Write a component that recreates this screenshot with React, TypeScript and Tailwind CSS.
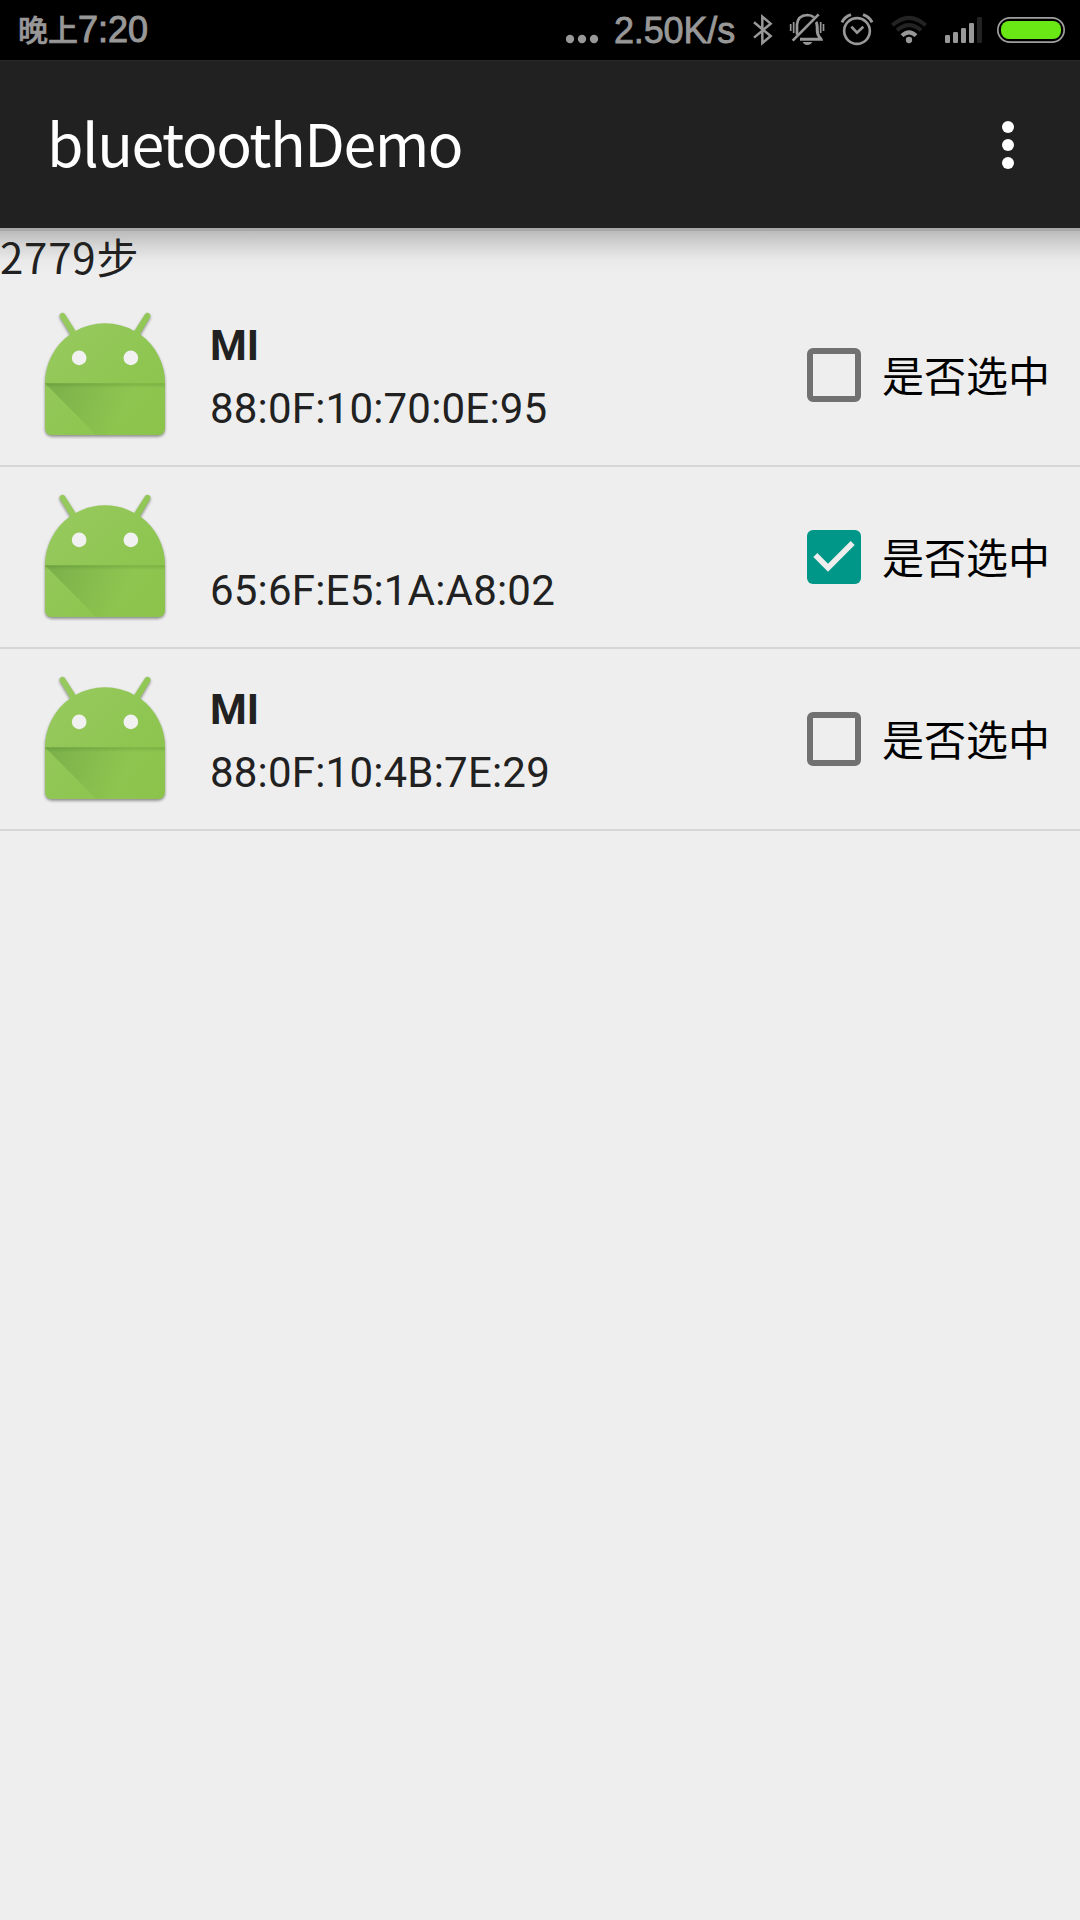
import React from "react";

const CJK = "font-['Noto_Sans_CJK_SC',sans-serif]";

function StatusIcons() {
  return (
    <div className="flex h-[60px] items-start text-[#989898]">
      <svg className="mr-[15px] h-[60px] w-[33px]" viewBox="48 0 99 180" fill="currentColor">
        <circle cx="60" cy="117" r="12.5" />
        <circle cx="96" cy="117" r="12.5" />
        <circle cx="132" cy="117" r="12.5" />
      </svg>
      <span className="mr-[15px] w-[121px] whitespace-nowrap pt-[1px] font-['Liberation_Sans',sans-serif] text-[36px] leading-[60px] tracking-[-0.15px] [-webkit-text-stroke:0.8px_#989898]">
        2.50K/s
      </span>
      <svg className="mr-[13px] h-[60px] w-[25px]" viewBox="600 0 75 180" fill="none" stroke="currentColor" strokeWidth="7.5">
        <path d="M612 67 L662 108 L637 129 V50 L662 71 L612 113" />
      </svg>
      <svg className="mr-[14px] h-[60px] w-[38px]" viewBox="24 0 114 180" fill="none" stroke="currentColor" strokeWidth="6">
        <path d="M51 104 V74 Q53 46 82 45 Q94 45 102 52" strokeWidth="8" />
        <path d="M38 122 L116 43" strokeWidth="8" />
        <path d="M108 66 Q112 70 112 96 Q113 104 118 111 Q122 115 123 118 H60" strokeWidth="9" />
        <path d="M32 72 V93 M41 66 V99 M122 66 V99 M130.500 72 V93" strokeWidth="5" />
        <path d="M68 126 H97 Q92 135 82 135 Q72 135 68 126Z" fill="currentColor" stroke="none" />
      </svg>
      <svg className="mr-[16px] h-[60px] w-[34px]" viewBox="180 0 102 180" fill="none" stroke="currentColor" strokeWidth="8">
        <circle cx="231" cy="93" r="38.5" />
        <path d="M214 80 L231 98 L250 80" />
        <path d="M186 67 Q192 52 213 44 M276 67 Q270 52 249 44" strokeWidth="9" />
      </svg>
      <svg className="mr-[16px] h-[60px] w-[38px]" viewBox="330 0 114 180" fill="none" stroke="#232323" strokeWidth="12">
        <path d="M337 76 Q387 31 437 76" />
        <path d="M351 91 Q387 60 423 91" />
        <path d="M366 107 Q387 87 408 107" stroke="#989898" />
        <circle cx="387" cy="120" r="9.500" fill="#989898" stroke="none" />
      </svg>
      <svg className="mr-[13px] h-[60px] w-[39px]" viewBox="492 0 117 180" fill="currentColor">
        <rect x="495" y="105" width="15" height="24" rx="4" />
        <rect x="519" y="96" width="15" height="33" rx="4" />
        <rect x="543" y="84" width="15" height="45" rx="4" />
        <rect x="567" y="69" width="15" height="60" rx="4" />
        <rect x="591" y="51" width="15" height="78" rx="4" fill="#232323" />
      </svg>
      <svg className="h-[60px] w-[70px]" viewBox="648 0 210 180">
        <rect x="653.5" y="53.5" width="199" height="73" rx="36.500" fill="none" stroke="#a0a0a0" strokeWidth="5" />
        <rect x="663" y="63" width="180" height="54" rx="24" fill="#6ae816" />
      </svg>
    </div>
  );
}

function AndroidIcon({ id }: { id: string }) {
  const body = "M75 280 A180 180 0 0 1 151 133 L119 80 A9 9 0 0 1 134 71 L167 123 A180 180 0 0 1 343 123 L376 71 A9 9 0 0 1 391 80 L360 133 A180 180 0 0 1 435 280 V413 Q435 435 413 435 H97 Q75 435 75 413Z";
  return (
    <svg className="size-[144px] shrink-0" viewBox="39 39 432 432">
      <defs>
        <linearGradient id={`${id}-body`} x1="0" y1="0" x2="1" y2="1">
          <stop offset="0" stopColor="#98ca60" />
          <stop offset="0.6" stopColor="#8fc652" />
          <stop offset="1" stopColor="#8bc34a" />
        </linearGradient>
        <linearGradient id={`${id}-cast`} gradientUnits="userSpaceOnUse" x1="80" y1="285" x2="300" y2="380">
          <stop offset="0" stopColor="#33691e" stopOpacity="0.26" />
          <stop offset="1" stopColor="#33691e" stopOpacity="0" />
        </linearGradient>
        <linearGradient id={`${id}-edge`} x1="0" y1="0" x2="0" y2="1">
          <stop offset="0" stopColor="#33691e" stopOpacity="0.22" />
          <stop offset="1" stopColor="#33691e" stopOpacity="0" />
        </linearGradient>
        <filter id={`${id}-blur`} x="-10%" y="-10%" width="120%" height="120%">
          <feGaussianBlur stdDeviation="4" />
        </filter>
      </defs>
      <path d={body} fill="#000" opacity="0.42" filter={`url(#${id}-blur)`} transform="translate(0 5)" />
      <path d={body} fill={`url(#${id}-body)`} />
      <path d="M75 280 H435 V413 Q435 435 413 435 H229Z" fill={`url(#${id}-cast)`} />
      <rect x="75" y="280" width="360" height="14" fill={`url(#${id}-edge)`} />
      <circle cx="177.500" cy="203.500" r="22" fill="#f1f1f1" />
      <circle cx="332.500" cy="203.500" r="22" fill="#f1f1f1" />
    </svg>
  );
}

function CheckBox({ checked }: { checked: boolean }) {
  if (!checked) {
    return <span className="size-[54px] rounded-[6px] border-[6px] border-[#717171]" />;
  }
  return (
    <span className="size-[54px] rounded-[6px] bg-[#009688]">
      <svg className="size-[54px]" viewBox="0 0 162 162" fill="none" stroke="#eeeeee" strokeWidth="17">
        <path d="M25 75 L63 113 L137 39" />
      </svg>
    </span>
  );
}

const devices = [
  { id: "a", name: "MI", mac: "88:0F:10:70:0E:95", checked: false },
  { id: "b", name: "", mac: "65:6F:E5:1A:A8:02", checked: true },
  { id: "c", name: "MI", mac: "88:0F:10:4B:7E:29", checked: false },
];

export default function App() {
  return (
    <div className={`flex h-[1920px] w-[1080px] flex-col overflow-hidden bg-[#eeeeee] ${CJK}`}>
      <header className="flex h-[60px] shrink-0 justify-between bg-black pl-[18px] pr-[14px]">
        <div className="flex items-center leading-[60px] text-[#989898]">
          <span className="pb-[4px] text-[30px] font-medium leading-[56px] [-webkit-text-stroke:0.6px_#989898]">晚上</span>
          <span className="pb-[1px] font-['Liberation_Sans',sans-serif] text-[36px] leading-[59px] [-webkit-text-stroke:1px_#989898]">7:20</span>
        </div>
        <StatusIcons />
      </header>
      <div className="flex h-[168px] shrink-0 items-center justify-between border-t border-[#2b292b] bg-[#212121] pl-[47px] pr-[66px]">
        <h1 className="pb-[5px] text-[59px] leading-[80px] tracking-[-1.5px] text-white">bluetoothDemo</h1>
        <div className="flex flex-col gap-[6px]">
          <span className="size-[12px] rounded-full bg-white" />
          <span className="size-[12px] rounded-full bg-white" />
          <span className="size-[12px] rounded-full bg-white" />
        </div>
      </div>
      <main className="flex grow flex-col bg-[linear-gradient(#a8a8a8_0px,#a8a8a8_3px,#bbbbbb_3px,#d6d6d6_18px,#e9e9e9_32px,#eeeeee_46px)]">
        <p className="h-[57px] text-[42px] leading-[55px] text-[#212121]">
          <span className="tracking-[0.8px]">2779</span>步
        </p>
        {devices.map((d) => (
          <div key={d.id} className="flex h-[182px] items-center border-b-2 border-[#d6d6d6] pl-[33px] pr-[30px]">
            <AndroidIcon id={d.id} />
            <div className="ml-[33px] grow pt-[4px] font-['Roboto',sans-serif] text-[42px] leading-[63px] text-[#212121]">
              <div className="h-[63px] font-bold">{d.name}</div>
              <div className="h-[63px] tracking-[0.2px]">{d.mac}</div>
            </div>
            <label className="flex items-center gap-[21px]">
              <CheckBox checked={d.checked} />
              <span className="pb-[2px] text-[42px] leading-[56px] text-black">是否选中</span>
            </label>
          </div>
        ))}
      </main>
    </div>
  );
}
